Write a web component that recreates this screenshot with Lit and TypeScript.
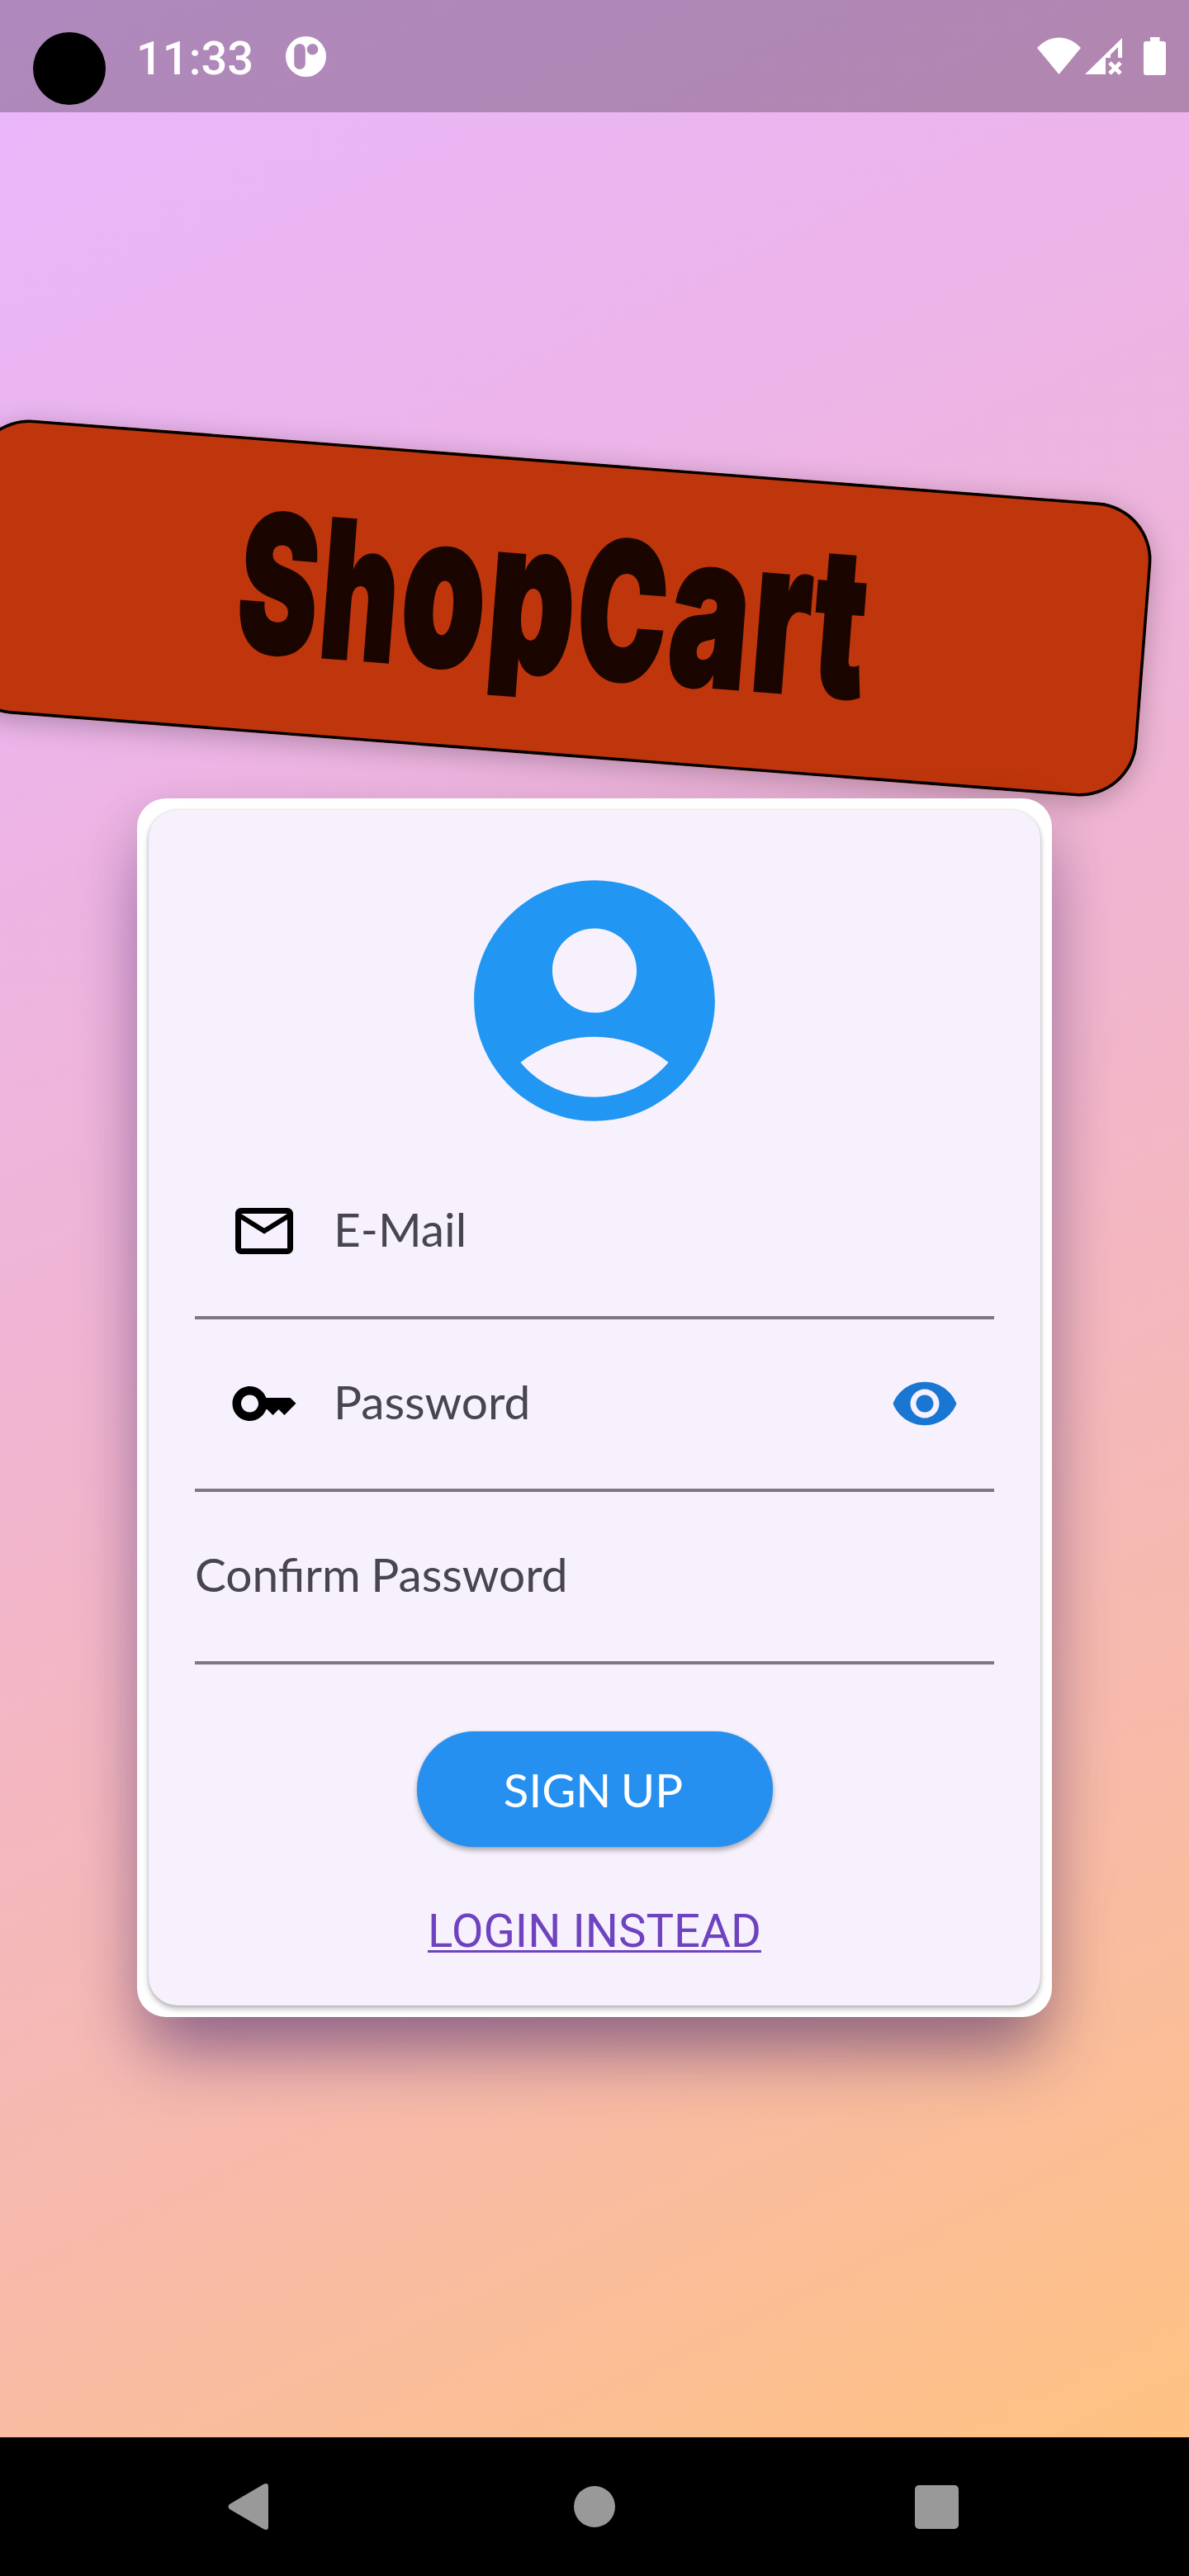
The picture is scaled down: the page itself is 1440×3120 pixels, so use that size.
import { LitElement, html, css } from "lit";
import { customElement } from "lit/decorators.js";

@customElement("app-root")
class AppRoot extends LitElement {
  static styles = css`
    :host { display: block; }
    * { box-sizing: border-box; }
    .screen {
      width: 1440px; height: 3120px; display: flex; flex-direction: column; overflow: hidden;
      font-family: Lato, "Liberation Sans", sans-serif;
    }
    .body {
      height: 2952px; display: flex; flex-direction: column; align-items: center; overflow: hidden;
      background: linear-gradient(154deg, rgb(234,183,253) 0%, rgb(236,180,232) 25%, rgb(241,181,206) 50%, rgb(247,186,171) 75%, rgb(255,194,130) 100%);
    }
    .status {
      width: 100%; height: 136px; flex: none; display: flex; align-items: center;
      background: rgba(0,0,0,.25); color: #fff; padding: 0 28px 0 40px;
    }
    .camera { width: 88px; height: 88px; border-radius: 50%; background: #000; margin-top: 30px; }
    .clock { font: 500 56px/68px Roboto, sans-serif; margin: 5px 0 0 37px; width: 145px; white-space: nowrap; }
    .notif { margin-left: 36px; width: 49px; height: 49px; }
    .spacer { flex: 1; }
    .status svg { display: block; flex: none; }
    .wifi { margin-right: 4px; }
    .signal { margin-right: 25px; }
    .banner {
      flex: none; width: 1433px; height: 357px; margin: 422px 98px 0 0; border-radius: 70px;
      background: #bf360c; transform: rotate(4.42deg);
      box-shadow: inset 0 0 0 3.6px #000, 0 7px 33px rgba(0,0,0,.26);
      display: flex; align-items: center; justify-content: center;
    }
    .title {
      font: 900 231px/300px Inter, sans-serif; color: #1a0500; transform: translateY(-4px) scaleX(.625); white-space: nowrap;
      letter-spacing: 6.5px; -webkit-text-stroke: 4px #1a0500; clip-path: inset(0 -20px 35px -20px);
    }
    .low { font-size: 1.12em; line-height: 1; }
    .tee { font-size: 1.09em; line-height: 1; }
    .card {
      flex: none; width: 1108px; height: 1476px; margin-top: 52px; padding: 14px; background: #fff; border-radius: 35px;
      box-shadow: 0 56px 84px -14px rgba(49,20,110,.45), 0 21px 60px 4px rgba(0,0,0,.11);
      position: relative;
    }
    .panel {
      height: 1448px; border-radius: 35px; background: #f6f1fc; padding: 56px 56px 0;
      box-shadow: 0 4px 7px rgba(0,0,0,.28), 0 0 3px rgba(0,0,0,.14);
      display: flex; flex-direction: column; align-items: center;
    }
    .avatar { width: 350px; height: 350px; flex: none; margin-bottom: 2px; }
    .field {
      flex: none; width: 968px; height: 209px; border-bottom: 4px solid #7e7886; display: flex; align-items: center;
      color: #49454f; font-size: 56.8px; line-height: 70px; word-spacing: -2px;
    }
    .field span { margin-bottom: 8px; }
    .lead { width: 84px; height: 84px; margin: 0 42px 2px; flex: none; }
    .trail { width: 84px; height: 84px; margin: 0 42px 2px auto; flex: none; }
    .signup {
      width: 431px; height: 140px; border-radius: 70px; margin-top: 81px; flex: none; background: #2590f0; color: #fff;
      display: flex; align-items: center; justify-content: center; font-size: 56.4px; word-spacing: -3px; padding-right: 3px;
      box-shadow: 0 4px 6px rgba(0,0,0,.3), 0 0 2px rgba(0,0,0,.15);
    }
    .login {
      font: 400 56.4px/66px Roboto, sans-serif; color: #6f43c0; margin-top: 69px; white-space: nowrap;
      text-decoration: underline; text-decoration-thickness: 3px; text-underline-offset: 4px;
    }
    .nav { height: 168px; background: #000; display: flex; padding-left: 276px; align-items: center; }
    .nav svg { display: block; flex: none; }
    .home { margin: 0 363px 0 370px; }
  `;

  render() {
    return html`
      <div class="screen">
        <div class="body">
          <div class="status">
            <div class="camera"></div>
            <div class="clock">11:33</div>
            <svg class="notif" viewBox="0 0 49 49"><path fill="#fff" fill-rule="evenodd" d="M24.5 0a24.5 24.5 0 1 1 0 49 24.5 24.5 0 0 1 0-49zM17 9a6.8 6.8 0 0 0-6.800 6.800v17.400a6.800 6.800 0 0 0 13.600 0v-17.400A6.800 6.800 0 0 0 17 9zM32.500 9a6.800 6.800 0 1 0 0 13.600 6.800 6.800 0 0 0 0-13.600z"/></svg>
            <div class="spacer"></div>
            <svg class="wifi" width="54" height="46" viewBox="0 0 54 46"><path fill="#fff" d="M0 13Q12 .5 26.500 .5T53 13L26.500 45z"/></svg>
            <svg class="signal" width="46" height="46" viewBox="0 0 46 46"><path fill="#fff" d="M0 45L45 1V25H40V12L31 21V25H25V45z"/><path stroke="#fff" stroke-width="5" d="M30 31L43 44M43 31L30 44"/></svg>
            <svg width="27" height="46" viewBox="0 0 27 46"><path fill="#fff" d="M8 0H19.500V5H24Q27 5 27 8V43Q27 46 24 46H3Q0 46 0 43V8Q0 5 3 5H8z"/></svg>
          </div>
          <div class="banner"><div class="title">Sh<span class="low">op</span>C<span class="low">ar</span><span class="tee">t</span></div></div>
          <div class="card">
            <div class="panel">
              <svg class="avatar" viewBox="0 0 24 24"><path fill="#2196f3" d="M12 2C6.480 2 2 6.480 2 12s4.480 10 10 10 10-4.480 10-10S17.520 2 12 2zm0 4c1.930 0 3.500 1.570 3.500 3.500S13.930 13 12 13s-3.500-1.570-3.500-3.500S10.070 6 12 6zm0 14c-2.030 0-4.430-.820-6.140-2.880C7.550 15.800 9.680 15 12 15s4.450.800 6.140 2.120C16.430 19.180 14.030 20 12 20z"/></svg>
              <div class="field">
                <svg class="lead" viewBox="0 0 24 24"><path d="M22 6c0-1.100-.9-2-2-2H4c-1.100 0-2 .9-2 2v12c0 1.100.9 2 2 2h16c1.100 0 2-.9 2-2V6zm-2 0l-8 5-8-5h16zm0 12H4V8l8 5 8-5v10z"/></svg>
                <span>E-Mail</span>
              </div>
              <div class="field">
                <svg class="lead" viewBox="0 0 24 24"><path d="M21 10h-8.350C11.830 7.670 9.610 6 7 6c-3.310 0-6 2.690-6 6s2.690 6 6 6c2.610 0 4.830-1.670 5.650-4H13l2 2 2-2 2 2 4-4.040L21 10zM7 15c-1.650 0-3-1.350-3-3s1.350-3 3-3 3 1.350 3 3-1.350 3-3 3z"/></svg>
                <span>Password</span>
                <svg class="trail" viewBox="0 0 24 24"><path fill="#1976d2" d="M12 4.500C7 4.500 2.730 7.610 1 12c1.730 4.390 6 7.500 11 7.500s9.270-3.110 11-7.500c-1.730-4.390-6-7.500-11-7.500zM12 17c-2.760 0-5-2.240-5-5s2.240-5 5-5 5 2.240 5 5-2.240 5-5 5zm0-8c-1.660 0-3 1.340-3 3s1.340 3 3 3 3-1.340 3-3-1.340-3-3-3z"/></svg>
              </div>
              <div class="field"><span>Confirm Password</span></div>
              <div class="signup">SIGN UP</div>
              <div class="login">LOGIN INSTEAD</div>
            </div>
          </div>
        </div>
        <div class="nav">
          <svg width="49" height="56" viewBox="0 0 49 56"><path fill="#999" d="M2 25L43 1Q49-2 49 4V52Q49 58 43 55L2 31Q-1 28 2 25z"/></svg>
          <svg class="home" width="50" height="50" viewBox="0 0 50 50"><circle cx="25" cy="25" r="25" fill="#999"/></svg>
          <svg width="53" height="53" viewBox="0 0 53 53"><rect width="53" height="53" rx="5" fill="#999"/></svg>
        </div>
      </div>`;
  }
}
